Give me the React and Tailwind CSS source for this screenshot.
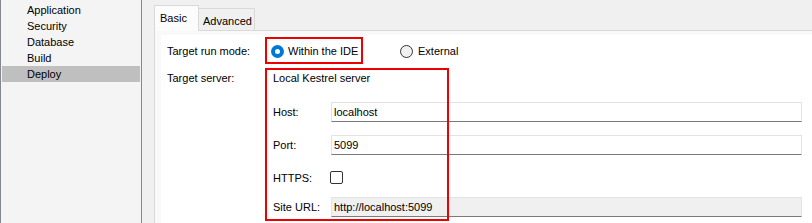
import React from "react";

const navItems = ["Application", "Security", "Database", "Build", "Deploy"];

const Radio = ({ checked }) => (
  <svg width="13" height="13" viewBox="0 0 13 13" className="shrink-0">
    {checked ? (
      <>
        <circle cx="6.5" cy="6.5" r="6.5" fill="#0078d7" />
        <circle cx="6.5" cy="6.5" r="2.5" fill="#ffffff" />
      </>
    ) : (
      <circle cx="6.5" cy="6.5" r="6" fill="#f0f0f0" stroke="#333333" strokeWidth="1" />
    )}
  </svg>
);

const Field = ({ label, value, readOnly }) => (
  <div className="flex items-center h-[20px]">
    <div className="w-[58px] shrink-0">{label}</div>
    <div
      className={`flex-1 h-[20px] flex items-center pl-[2px] border border-[#e3e3e3] border-b-[#7a7a7a] ${
        readOnly ? "bg-[#f0f0f0]" : "bg-white"
      }`}
    >
      {value}
    </div>
  </div>
);

export default function App() {
  return (
    <div
      className="relative flex w-[812px] h-[223px] overflow-hidden bg-[#f0f0f0] text-[11px] leading-[14px] text-black"
      style={{ fontFamily: '"Liberation Sans", Arial, sans-serif' }}
    >
      {/* Sidebar */}
      <div className="w-[142px] h-full shrink-0 bg-[#f4f4f4] border-l border-r border-[#828790] pt-[2px] px-[1px]">
        {navItems.map((item) => (
          <div
            key={item}
            className={`h-[16px] flex items-center pl-[25px] ${
              item === "Deploy" ? "bg-[#bfbfbf]" : ""
            }`}
          >
            {item}
          </div>
        ))}
      </div>

      {/* Tab control */}
      <div className="flex-1 flex flex-col ml-[12px]">
        <div className="h-[30px] flex items-end shrink-0">
          <div className="relative z-10 -mb-px w-[45px] h-[26px] bg-[#fcfcfc] border border-b-0 border-[#d9d9d9] flex items-start pt-[5px] pl-[5px]">
            Basic
          </div>
          <div className="w-[56px] h-[22px] bg-[#f0f0f0] border border-l-0 border-b-0 border-[#d9d9d9] flex items-start pt-[5px] pl-[4px]">
            Advanced
          </div>
        </div>

        <div className="flex-1 flex border-t border-l border-[#d9d9d9] bg-[#f9f9f9] pt-[4px] pl-[6px]">
          <div className="flex-1 bg-white pl-[6px] pr-[10px]">
            {/* Target run mode */}
            <div className="mt-[4px] h-[24px] flex items-center">
              <div className="w-[104px] shrink-0">Target run mode:</div>
              <div className="w-[129px] flex items-center gap-[4px]">
                <Radio checked />
                <span>Within the IDE</span>
              </div>
              <div className="flex items-center gap-[5px]">
                <Radio />
                <span>External</span>
              </div>
            </div>

            {/* Target server */}
            <div className="mt-[8px] flex">
              <div className="w-[106px] shrink-0">Target server:</div>
              <div className="flex-1 flex flex-col">
                <div>Local Kestrel server</div>
                <div className="mt-[17px]">
                  <Field label="Host:" value="localhost" />
                </div>
                <div className="mt-[13px]">
                  <Field label="Port:" value="5099" />
                </div>
                <div className="mt-[16px] h-[13px] flex items-center">
                  <div className="w-[57px] shrink-0">HTTPS:</div>
                  <div className="w-[13px] h-[13px] rounded-[2px] border border-[#333333] bg-white" />
                </div>
                <div className="mt-[13px]">
                  <Field label="Site URL:" value="http://localhost:5099" readOnly />
                </div>
              </div>
            </div>
          </div>
        </div>
      </div>

      {/* Highlight boxes */}
      <div className="absolute left-[265px] top-[37px] w-[98px] h-[27px] border-2 border-[#ee0000]" />
      <div className="absolute left-[265px] top-[68px] w-[184px] h-[153px] border-2 border-[#ee0000]" />
    </div>
  );
}
